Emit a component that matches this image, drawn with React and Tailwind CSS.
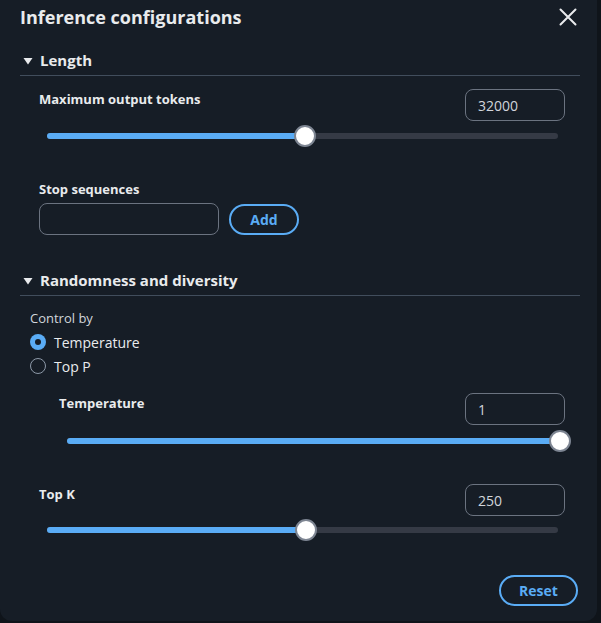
const Caret = () => (
  <svg width="12" height="12" viewBox="0 0 12 12" className="shrink-0">
    <path d="M1.5 3 L10.5 3 L6 9.5 Z" fill="#e9ebed" />
  </svg>
);

const CloseIcon = () => (
  <svg width="18" height="18" viewBox="0 0 18 18" className="mr-[3px]">
    <path d="M1.5 1.5 L16.5 16.5 M16.5 1.5 L1.5 16.5" stroke="#e9ebed" strokeWidth="2" strokeLinecap="round" />
  </svg>
);

const SectionHeader = ({ title, className = '' }) => (
  <div className={`flex items-center h-[28px] pb-[2px] border-b border-[#414d5c] pl-[2px] ${className}`}>
    <Caret />
    <span className="ml-[6px] text-[15px] font-bold text-[#e9ebed] leading-none">{title}</span>
  </div>
);

const NumberField = ({ value }) => (
  <div className="w-[100px] h-[32px] rounded-lg border border-[#6b7380] flex items-center px-[12px] text-[14px] text-[#d1d5db]">
    {value}
  </div>
);

const Slider = ({ pct, className = '' }) => (
  <div className={`h-[28px] flex items-center ${className}`}>
    <div className="relative w-full h-[6px] rounded-full bg-[#353a45]">
      <div className="h-full rounded-full bg-[#5aacf5]" style={{ width: `${pct}%` }} />
      <div
        className="absolute top-1/2 w-[22px] h-[22px] -translate-x-1/2 -translate-y-1/2 rounded-full bg-white border-2 border-[#7d8592]"
        style={{ left: `${pct}%` }}
      />
    </div>
  </div>
);

const Radio = ({ label, checked }) => (
  <div className="flex items-center h-[24px]">
    {checked ? (
      <span className="w-[16px] h-[16px] rounded-full bg-[#5aacf5] flex items-center justify-center">
        <span className="w-[6px] h-[6px] rounded-full bg-[#161d26]" />
      </span>
    ) : (
      <span className="w-[16px] h-[16px] rounded-full border-[1.5px] border-[#8d99a8]" />
    )}
    <span className="ml-[8px] text-[14px] text-[#e9ebed]">{label}</span>
  </div>
);

const PillButton = ({ children, className = '' }) => (
  <button
    type="button"
    className={`h-[31px] rounded-full border-2 border-[#5aacf5] text-[#5aacf5] text-[14px] font-bold flex items-center justify-center ${className}`}
  >
    {children}
  </button>
);

export default function App() {
  return (
    <div className="min-h-screen bg-[#0f141a]" style={{ fontFamily: '"Open Sans", "Noto Sans", sans-serif' }}>
      <div className="w-[597px] h-[621px] bg-[#161d26] rounded-b-xl pl-5 pr-[17px]">
        <div className="h-[33px] flex items-center justify-between">
          <h2 className="text-[18px] font-bold text-[#e9ebed] leading-none">Inference configurations</h2>
          <CloseIcon />
        </div>

        <SectionHeader title="Length" className="mt-[15px]" />

        <div className="mt-[13px] flex justify-between items-start">
          <span className="ml-[19px] mt-[1px] text-[13px] font-bold text-[#e9ebed]">Maximum output tokens</span>
          <div className="mr-[15px]"><NumberField value="32000" /></div>
        </div>
        <Slider pct={50.5} className="ml-[27px] mr-[22px] mt-[1px]" />

        <div className="ml-[19px] mt-[31px]">
          <div className="text-[13px] font-bold text-[#e9ebed] leading-[16px]">Stop sequences</div>
          <div className="mt-[6px] flex items-center gap-[10px]">
            <div className="w-[180px] h-[32px] rounded-lg border border-[#6b7380]" />
            <PillButton className="w-[70px]">Add</PillButton>
          </div>
        </div>

        <SectionHeader title="Randomness and diversity" className="mt-[33px]" />

        <div className="ml-[10px] mt-[13px]">
          <div className="text-[13px] text-[#d1d5db] leading-[18px]">Control by</div>
          <div className="mt-[3px]">
            <Radio label="Temperature" checked />
            <Radio label="Top P" />
          </div>
        </div>

        <div className="mt-[15px] flex justify-between items-start">
          <span className="ml-[39px] mt-[1px] text-[13px] font-bold text-[#e9ebed]">Temperature</span>
          <div className="mr-[15px]"><NumberField value="1" /></div>
        </div>
        <Slider pct={100} className="ml-[47px] mr-[20px] mt-[2px]" />

        <div className="mt-[29px] flex justify-between items-start">
          <span className="ml-[19px] mt-[1px] text-[13px] font-bold text-[#e9ebed]">Top K</span>
          <div className="mr-[15px]"><NumberField value="250" /></div>
        </div>
        <Slider pct={50.7} className="ml-[27px] mr-[22px]" />

        <div className="mt-[31px] flex justify-end">
          <PillButton className="w-[79px] mr-[2px]">Reset</PillButton>
        </div>
      </div>
    </div>
  );
}
